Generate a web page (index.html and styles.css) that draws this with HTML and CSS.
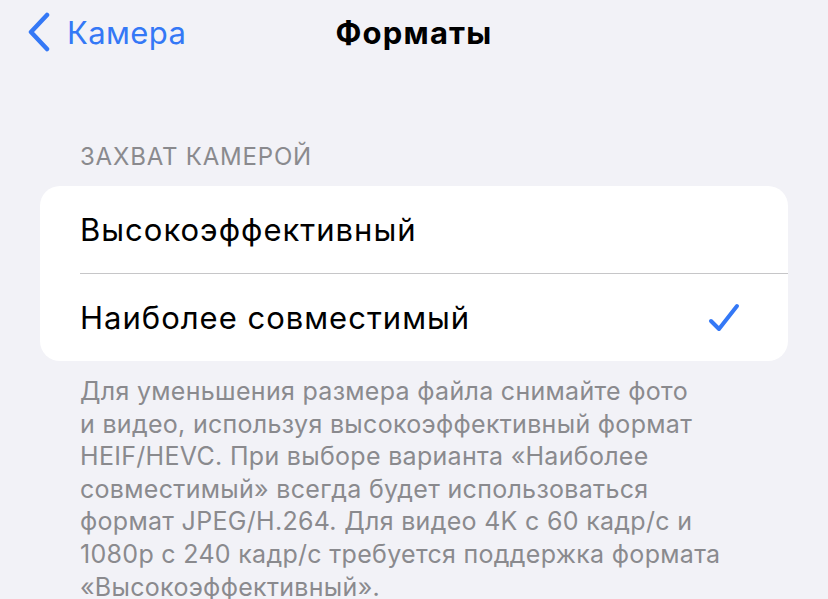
FILE: index.html
```html
<!DOCTYPE html>
<html lang="ru">
<head>
  <meta charset="UTF-8">
  <meta name="viewport" content="width=device-width, initial-scale=1.0">
  <title>Форматы</title>
  <link rel="stylesheet" href="styles.css">
</head>
<body>
  <header class="navbar">
    <a class="back" href="#">
      <svg class="chevron" width="24" height="40" viewBox="0 0 24 40">
        <path d="M20 3 L4 20 L20 37" fill="none" stroke="currentColor" stroke-width="4.5" stroke-linecap="round" stroke-linejoin="round"/>
      </svg>
      <span>Камера</span>
    </a>
    <h1>Форматы</h1>
  </header>

  <section class="group">
    <h3 class="group-title">ЗАХВАТ КАМЕРОЙ</h3>
    <div class="card">
      <div class="row">Высокоэффективный</div>
      <div class="row">
        <span>Наиболее совместимый</span>
        <svg class="check" width="32" height="32" viewBox="0 0 32 32">
          <path d="M3 19 L11 27 L29 4" fill="none" stroke="currentColor" stroke-width="4" stroke-linecap="round" stroke-linejoin="round"/>
        </svg>
      </div>
    </div>
    <p class="footnote">Для уменьшения размера файла снимайте фото<br>и видео, используя высокоэффективный формат HEIF/HEVC. При выборе варианта «Наиболее совместимый» всегда будет использоваться формат JPEG/H.264. Для видео 4K с 60 кадр/с и 1080p с 240 кадр/с требуется поддержка формата «Высокоэффективный».</p>
  </section>
</body>
</html>
```

FILE: styles.css
```css
:root {
  --bg: #f2f2f7;
  --card: #ffffff;
  --blue: #3478f6;
  --gray: #8a8a8e;
  --sep: #c6c6c8;
}

body {
  margin: 0;
  background: var(--bg);
  font-family: Inter, "Noto Sans", sans-serif;
  color: #000;
  overflow: hidden;
}

.navbar {
  position: relative;
  height: 64px;
  display: flex;
  align-items: center;
  justify-content: center;
}

.navbar h1 {
  margin: 0;
  font-size: 31px;
  font-weight: 700;
  letter-spacing: 1.2px;
}

.back {
  position: absolute;
  left: 27px;
  top: 12px;
  display: flex;
  align-items: center;
  gap: 16px;
  color: var(--blue);
  text-decoration: none;
  font-size: 31px;
  letter-spacing: 0.4px;
}

.group {
  padding: 78px 40px 0;
}

.group-title {
  margin: 0 0 15px 40px;
  font-size: 24px;
  font-weight: 400;
  color: var(--gray);
  letter-spacing: 0.8px;
}

.card {
  background: var(--card);
  border-radius: 20px;
  overflow: hidden;
}

.row {
  height: 87px;
  margin-left: 40px;
  padding-right: 48px;
  display: flex;
  align-items: center;
  justify-content: space-between;
  font-size: 31px;
  letter-spacing: 1px;
}

.row + .row {
  border-top: 1px solid var(--sep);
}

.check {
  color: var(--blue);
}

.footnote {
  max-width: 655px;
  margin: 14px 0 0 40px;
  font-size: 25px;
  line-height: 32.6px;
  letter-spacing: 0.3px;
  color: var(--gray);
}
```
